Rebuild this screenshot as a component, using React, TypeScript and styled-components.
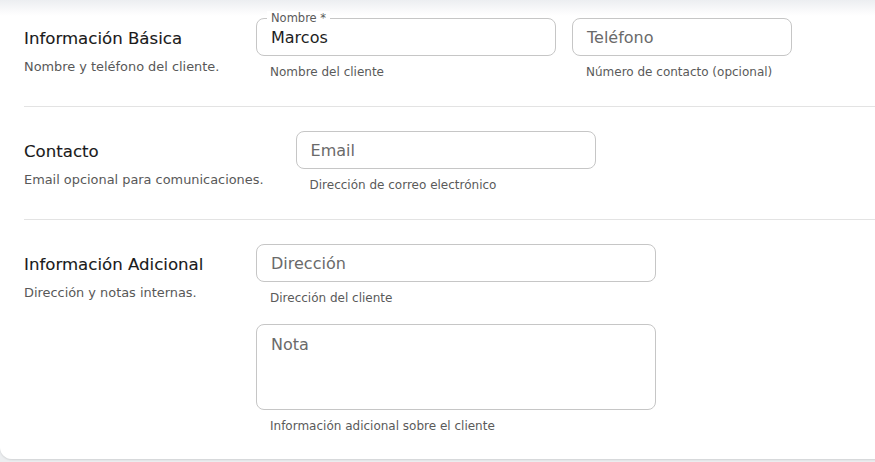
import React from 'react';
import styled, { createGlobalStyle } from 'styled-components';

const GlobalStyle = createGlobalStyle`
  html, body {
    margin: 0;
    padding: 0;
    background: #eceef0;
    overflow: hidden;
  }
  body {
    font-family: 'DejaVu Sans', 'Liberation Sans', sans-serif;
  }
`;

const Card = styled.div`
  width: calc(100% + 24px);
  background: linear-gradient(to bottom, #eceef1 0, #fbfbfc 12px, #ffffff 16px);
  border-radius: 0 0 12px 12px;
  box-shadow: 0 1px 2px rgba(0, 0, 0, 0.12);
  padding: 0 0 0 24px;
  box-sizing: border-box;
  margin-bottom: 4px;
`;

const Section = styled.section<{ $first?: boolean; $last?: boolean }>`
  display: flex;
  gap: 32px;
  padding: ${({ $first }) => ($first ? '18px' : '24px')} 0 ${({ $last }) => ($last ? '25px' : '26px')};
  border-bottom: ${({ $last }) => ($last ? 'none' : '1px solid #e3e3e3')};
`;

const Intro = styled.div`
  min-width: 200px;
  padding-top: 10px;
`;

const Title = styled.h3`
  margin: 0;
  font-size: 16.6px;
  line-height: 22px;
  font-weight: 400;
  color: #1a1a1a;
  -webkit-text-stroke: 0.1px #1a1a1a;
`;

const Desc = styled.p`
  margin: 8px 0 0;
  font-size: 12.9px;
  line-height: 18px;
  color: #585858;
`;

const Fields = styled.div<{ $column?: boolean }>`
  display: flex;
  flex-direction: ${({ $column }) => ($column ? 'column' : 'row')};
  gap: ${({ $column }) => ($column ? '18px' : '16px')};
  align-items: flex-start;
`;

const Field = styled.div<{ $width: number }>`
  width: ${({ $width }) => $width}px;
`;

const Box = styled.div<{ $tall?: boolean }>`
  position: relative;
  height: ${({ $tall }) => ($tall ? '86px' : '38px')};
  border: 1px solid #c6c6c6;
  border-radius: 8px;
  box-sizing: border-box;
  padding: ${({ $tall }) => ($tall ? '9px 14px' : '2px 14px 0')};
  display: flex;
  align-items: ${({ $tall }) => ($tall ? 'flex-start' : 'center')};
  font-size: 16px;
  line-height: 22px;
  color: #6a6a6a;
`;

const Value = styled.span`
  color: #1e1e1e;
`;

const Floating = styled.span`
  position: absolute;
  left: 10px;
  top: -8px;
  padding: 0 4px;
  background: #fff;
  font-size: 11.5px;
  line-height: 14px;
  color: #5a5a5a;
`;

const Helper = styled.div`
  margin-top: 8px;
  padding-left: 14px;
  font-size: 12px;
  line-height: 16px;
  color: #5a5a5a;
`;

const App: React.FC = () => {
  return (
    <>
      <GlobalStyle />
      <Card>
        <Section $first>
          <Intro>
            <Title>Información Básica</Title>
            <Desc>Nombre y teléfono del cliente.</Desc>
          </Intro>
          <Fields>
            <Field $width={300}>
              <Box>
                <Floating>Nombre *</Floating>
                <Value>Marcos</Value>
              </Box>
              <Helper>Nombre del cliente</Helper>
            </Field>
            <Field $width={220}>
              <Box>Teléfono</Box>
              <Helper>Número de contacto (opcional)</Helper>
            </Field>
          </Fields>
        </Section>

        <Section>
          <Intro>
            <Title>Contacto</Title>
            <Desc>Email opcional para comunicaciones.</Desc>
          </Intro>
          <Fields>
            <Field $width={300}>
              <Box>Email</Box>
              <Helper>Dirección de correo electrónico</Helper>
            </Field>
          </Fields>
        </Section>

        <Section $last>
          <Intro>
            <Title>Información Adicional</Title>
            <Desc>Dirección y notas internas.</Desc>
          </Intro>
          <Fields $column>
            <Field $width={400}>
              <Box>Dirección</Box>
              <Helper>Dirección del cliente</Helper>
            </Field>
            <Field $width={400}>
              <Box $tall>Nota</Box>
              <Helper>Información adicional sobre el cliente</Helper>
            </Field>
          </Fields>
        </Section>
      </Card>
    </>
  );
};

export default App;
